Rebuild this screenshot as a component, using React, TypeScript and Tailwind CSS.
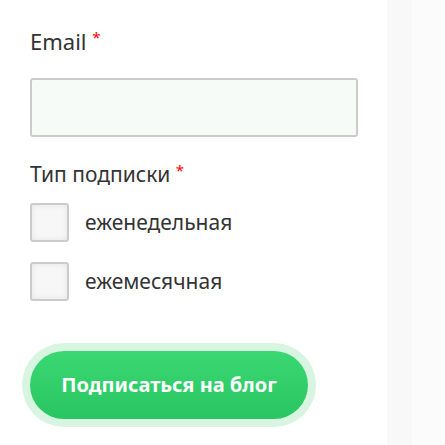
export default function App() {
  return (
    <div className="flex w-[445px] h-[445px] bg-white font-['Noto_Sans',sans-serif] text-[#333]">
      <div className="w-[387px] pl-[30px] pt-[26px]">
        <label className="block text-[22px] leading-[30px]">
          Email <span className="relative -top-[4px] text-[#ff0000] text-[15px] align-top">*</span>
        </label>
        <input
          type="text"
          className="mt-[22px] block w-[328px] h-[59px] border-2 border-[#cccccc] rounded-[3px] bg-[#f6fbf7] outline-none"
        />
        <div className="mt-[22px] text-[21px] leading-[30px]">
          Тип подписки <span className="relative -top-[4px] text-[#ff0000] text-[15px] align-top">*</span>
        </div>
        <div className="mt-[14px] flex flex-col gap-[20px]">
          <label className="flex items-center gap-[16px]">
            <span className="block w-[39px] h-[39px] border-2 border-[#cccccc] rounded-[3px] bg-[#f7f7f7] shadow-[inset_0_0_6px_rgba(0,0,0,0.08)]" />
            <span className="text-[21px]">еженедельная</span>
          </label>
          <label className="flex items-center gap-[16px]">
            <span className="block w-[39px] h-[39px] border-2 border-[#cccccc] rounded-[3px] bg-[#f7f7f7] shadow-[inset_0_0_6px_rgba(0,0,0,0.08)]" />
            <span className="text-[21px]">ежемесячная</span>
          </label>
        </div>
        <div className="mt-[42px] -ml-[8px] flex w-fit rounded-full bg-[#d8f5e2] p-[8px]">
          <button className="block h-[68px] w-[278px] rounded-full bg-gradient-to-b from-[#3ad873] to-[#28c562] text-white text-[20px] font-bold">
            Подписаться на блог
          </button>
        </div>
      </div>
      <div className="flex-1 flex">
        <div className="w-[25px] bg-[#f8f8f8]" />
        <div className="flex-1 bg-[#fbfbfb]" />
      </div>
    </div>
  );
}
